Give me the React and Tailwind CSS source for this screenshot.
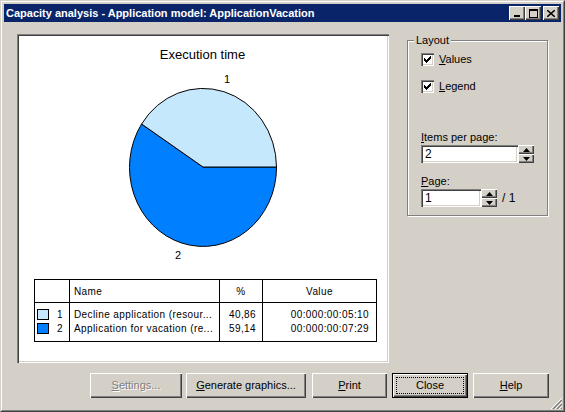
import React from "react";

const raised =
  "shadow-[inset_1px_1px_0_#ffffff,inset_-1px_-1px_0_#404040,inset_-2px_-2px_0_#808080]";
const sunken =
  "shadow-[inset_1px_1px_0_#808080,inset_2px_2px_0_#404040,inset_-1px_-1px_0_#ffffff,inset_-2px_-2px_0_#d4d0c8]";

const CheckMark = () => (
  <svg width="13" height="13" className="block">
    {[
      [3, 5],
      [4, 6],
      [5, 7],
      [6, 6],
      [7, 5],
      [8, 4],
      [9, 3],
    ].map(([x, y]) => (
      <rect key={x} x={x} y={y} width="1" height="3" fill="#000" />
    ))}
  </svg>
);

const Checkbox = ({ label, hot }) => (
  <div className="flex items-center h-[13px]">
    <div className={`w-[13px] h-[13px] bg-white ${sunken}`}>
      <CheckMark />
    </div>
    <span className="ml-[5px] leading-[13px]">
      <u>{hot}</u>
      {label}
    </span>
  </div>
);

const Arrow = ({ up }) => (
  <svg width="7" height="4" className="block">
    <path d={up ? "M3.5 0 L7 4 L0 4 Z" : "M0 0 L7 0 L3.5 4 Z"} fill="#000" />
  </svg>
);

const Spinner = () => (
  <div className="flex flex-col w-[16px] h-[18px]">
    <div className={`h-[9px] bg-[#d4d0c8] ${raised} flex items-center justify-center`}>
      <Arrow up />
    </div>
    <div className={`h-[9px] bg-[#d4d0c8] ${raised} flex items-center justify-center`}>
      <Arrow />
    </div>
  </div>
);

const Field = ({ value, width }) => (
  <div className={`h-[18px] bg-white ${sunken} pl-[4px] leading-[18px] text-[12px]`} style={{ width }}>
    {value}
  </div>
);

const TitleBtn = ({ children }) => (
  <div className={`w-[16px] h-[14px] bg-[#d4d0c8] ${raised} flex items-center justify-center`}>
    {children}
  </div>
);

const Button = ({ children, width, disabled, isDefault, className = "" }) => (
  <div
    className={`h-[25px] ${isDefault ? "border border-black" : ""} ${className}`}
    style={{ width }}
  >
    <div
      className={`h-full bg-[#d4d0c8] ${raised} flex items-center justify-center relative ${
        disabled ? "text-[#808080] [text-shadow:1px_1px_0_#ffffff]" : ""
      }`}
    >
      {isDefault && <div className="absolute inset-[3px] border border-dotted border-black" />}
      <span className="relative">{children}</span>
    </div>
  </div>
);

const slices = [
  { n: 1, color: "#c6e8fc", name: "Decline application (resour...", pct: "40,86", value: "00:000:00:05:10" },
  { n: 2, color: "#0080ff", name: "Application for vacation (re...", pct: "59,14", value: "00:000:00:07:29" },
];

export default function App() {
  const cx = 184;
  const cy = 104;
  const rx = 73.5;
  const ry = 79;
  const ex = 122.6;
  const ey = 61;

  return (
    <div className="w-[565px] h-[412px] bg-[#d4d0c8] border border-t-[#d4d0c8] border-l-[#d4d0c8] border-r-[#404040] border-b-[#404040] font-['Liberation_Sans',Arial,sans-serif] text-[11px] text-black relative overflow-hidden">
      <div className="h-full border border-t-white border-l-white border-r-[#808080] border-b-[#808080] px-[2px] pt-[2px] flex flex-col">
        {/* Title bar */}
        <div className="h-[18px] bg-[#0a246a] flex items-center pl-[2px] pr-[2px]">
          <span className="text-white font-bold text-[11px] flex-1">
            Capacity analysis - Application model: ApplicationVacation
          </span>
          <TitleBtn>
            <svg width="8" height="9" className="block">
              <rect x="1" y="6" width="6" height="2" fill="#000" />
            </svg>
          </TitleBtn>
          <TitleBtn>
            <svg width="9" height="9" className="block">
              <rect x="0.5" y="0.5" width="8" height="8" fill="none" stroke="#000" />
              <rect x="0" y="1" width="9" height="1" fill="#000" />
            </svg>
          </TitleBtn>
          <div className="ml-[2px]">
            <TitleBtn>
              <svg width="8" height="7" className="block">
                <path d="M0 0 L8 7 M8 0 L0 7" stroke="#000" strokeWidth="1.5" />
              </svg>
            </TitleBtn>
          </div>
        </div>

        {/* Content */}
        <div className="flex">
          {/* Chart panel */}
          <div className={`ml-[13px] mt-[12px] w-[372px] h-[329px] bg-white ${sunken} p-[2px] flex flex-col`}>
            <div className="mt-[11px] text-center text-[13px] leading-[16px] pr-[1px]">Execution time</div>
            <svg width="368" height="205" className="block">
              <path
                d={`M${cx} ${cy} L${ex} ${ey} A${rx} ${ry} 0 1 0 ${cx + rx} ${cy} Z`}
                fill="#0080ff"
                stroke="#000"
                strokeWidth="1"
              />
              <path
                d={`M${cx} ${cy} L${cx + rx} ${cy} A${rx} ${ry} 0 0 0 ${ex} ${ey} Z`}
                fill="#c6e8fc"
                stroke="#000"
                strokeWidth="1"
              />
              <text x="208" y="20" fontSize="11" textAnchor="middle" fontFamily="Liberation Sans, Arial, sans-serif">
                1
              </text>
              <text x="159" y="196" fontSize="11" textAnchor="middle" fontFamily="Liberation Sans, Arial, sans-serif">
                2
              </text>
            </svg>

            {/* Legend table */}
            <div className="ml-[15px] mt-[11px] w-[343px] border border-black text-[10px] tracking-[0.4px]">
              <div className="flex h-[23px] border-b border-black items-center">
                <div className="w-[35px] h-full border-r border-black" />
                <div className="w-[150px] h-full border-r border-black pl-[4px] flex items-center">Name</div>
                <div className="w-[43px] h-full border-r border-black flex items-center justify-center">%</div>
                <div className="flex-1 h-full flex items-center justify-center">Value</div>
              </div>
              <div className="flex h-[38px]">
                <div className="w-[35px] border-r border-black pl-[2px] pt-[6px] flex flex-col gap-[3px]">
                  {slices.map((s) => (
                    <div key={s.n} className="flex items-center h-[11px]">
                      <div className="w-[12px] h-[11px] border border-black" style={{ background: s.color }} />
                      <span className="ml-[8px]">{s.n}</span>
                    </div>
                  ))}
                </div>
                <div className="w-[150px] border-r border-black pl-[4px] pt-[6px] flex flex-col gap-[3px]">
                  {slices.map((s) => (
                    <div key={s.n} className="h-[11px] leading-[11px]">{s.name}</div>
                  ))}
                </div>
                <div className="w-[43px] border-r border-black pr-[6px] pt-[6px] flex flex-col gap-[3px] items-end">
                  {slices.map((s) => (
                    <div key={s.n} className="h-[11px] leading-[11px]">{s.pct}</div>
                  ))}
                </div>
                <div className="flex-1 pr-[7px] pt-[6px] flex flex-col gap-[3px] items-end">
                  {slices.map((s) => (
                    <div key={s.n} className="h-[11px] leading-[11px]">{s.value}</div>
                  ))}
                </div>
              </div>
            </div>
          </div>

          {/* Layout group */}
          <div className="ml-[18px] mt-[18px] w-[141px] h-[176px] relative border border-[#808080] shadow-[inset_1px_1px_0_#ffffff,1px_1px_0_#ffffff] pl-[13px] pt-[12px]">
            <div className="absolute -top-[7px] left-[6px] bg-[#d4d0c8] px-[2px] leading-[13px]">Layout</div>
            <Checkbox hot="V" label="alues" />
            <div className="mt-[14px]">
              <Checkbox hot="L" label="egend" />
            </div>
            <div className="mt-[38px] leading-[13px]">
              <u>I</u>tems per page:
            </div>
            <div className="flex mt-[1px]">
              <Field value="2" width={97} />
              <Spinner />
            </div>
            <div className="mt-[12px] leading-[13px]">
              <u>P</u>age:
            </div>
            <div className="flex items-center mt-[1px]">
              <Field value="1" width={60} />
              <Spinner />
              <span className="ml-[5px] text-[12px]">/ 1</span>
            </div>
          </div>
        </div>

        {/* Buttons */}
        <div className="flex mt-[10px] ml-[86px]">
          <Button width={92} disabled>
            <u>S</u>ettings...
          </Button>
          <Button width={120} className="ml-[4px]">
            <u>G</u>enerate graphics...
          </Button>
          <Button width={75} className="ml-[6px]">
            <u>P</u>rint
          </Button>
          <Button width={76} isDefault className="ml-[5px]">
            Close
          </Button>
          <Button width={76} className="ml-[5px]">
            <u>H</u>elp
          </Button>
        </div>
      </div>

      {/* Size grip */}
      <svg width="13" height="13" className="absolute right-[2px] bottom-[2px]">
        {[0, 4, 8].map((o) => (
          <g key={o}>
            <path d={`M${12 - o} 13 L13 ${12 - o}`} stroke="#808080" strokeWidth="1.5" />
            <path d={`M${10 - o} 13 L13 ${10 - o}`} stroke="#ffffff" strokeWidth="1" />
          </g>
        ))}
      </svg>
    </div>
  );
}
